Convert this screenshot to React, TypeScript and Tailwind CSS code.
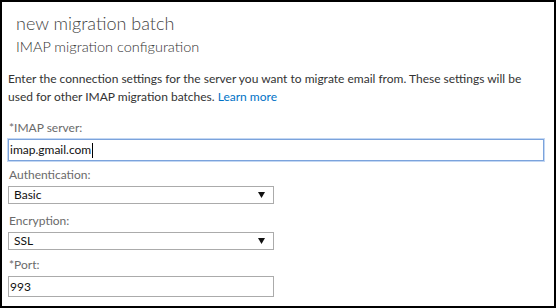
function Arrow() {
  return (
    <svg width="7" height="6" viewBox="0 0 7 6" className="shrink-0">
      <polygon points="0,0 7,0 3.5,6" fill="#111" />
    </svg>
  );
}

function Select({ value }: { value: string }) {
  return (
    <div className="ml-[6px] mt-[3px] flex h-[18px] w-[266px] items-center justify-between border border-[#ababab] bg-white pl-[5px] pr-[8px] text-[12px] leading-[16px] text-[#111]">
      <span>{value}</span>
      <Arrow />
    </div>
  );
}

function Label({ text, className }: { text: string; className: string }) {
  return <div className={`pl-[7px] text-[12px] leading-[16px] text-[#6a6a6a] ${className}`}>{text}</div>;
}

export default function App() {
  return (
    <div className="h-[308px] w-[556px] overflow-hidden border-2 border-black bg-white font-['Lato',sans-serif]">
      <div className="pl-[14px] pt-[9px] text-[18px] font-light leading-[24px] text-[#444]">new migration batch</div>
      <div className="mt-[2px] pl-[14px] text-[14.5px] font-light leading-[20px] text-[#333]">IMAP migration configuration</div>
      <div className="mt-[13px] w-[530px] pl-[6px] text-[12px] leading-[18px] text-[#333]">
        Enter the connection settings for the server you want to migrate email from. These settings will be used for other IMAP migration batches.{' '}
        <a className="text-[#0072c6]">Learn more</a>
      </div>
      <Label text="*IMAP server:" className="mt-[14px]" />
      <div className="ml-[6px] mt-[3px] flex h-[22px] w-[536px] items-center border border-[#7ba3dc] pl-[1px] text-[12px] leading-[16px] text-[#111] shadow-[0_0_0_1px_#c3d7f3]">
        <span>imap.gmail.com</span>
        <span className="ml-px h-[15px] w-px bg-black" />
      </div>
      <Label text="Authentication:" className="mt-[6px]" />
      <Select value="Basic" />
      <Label text="Encryption:" className="mt-[9px]" />
      <Select value="SSL" />
      <Label text="*Port:" className="mt-[7px]" />
      <div className="ml-[6px] mt-[3px] flex h-[21px] w-[266px] items-center border border-[#ababab] pl-[1px] text-[12px] leading-[16px] text-[#111]">
        993
      </div>
    </div>
  );
}
